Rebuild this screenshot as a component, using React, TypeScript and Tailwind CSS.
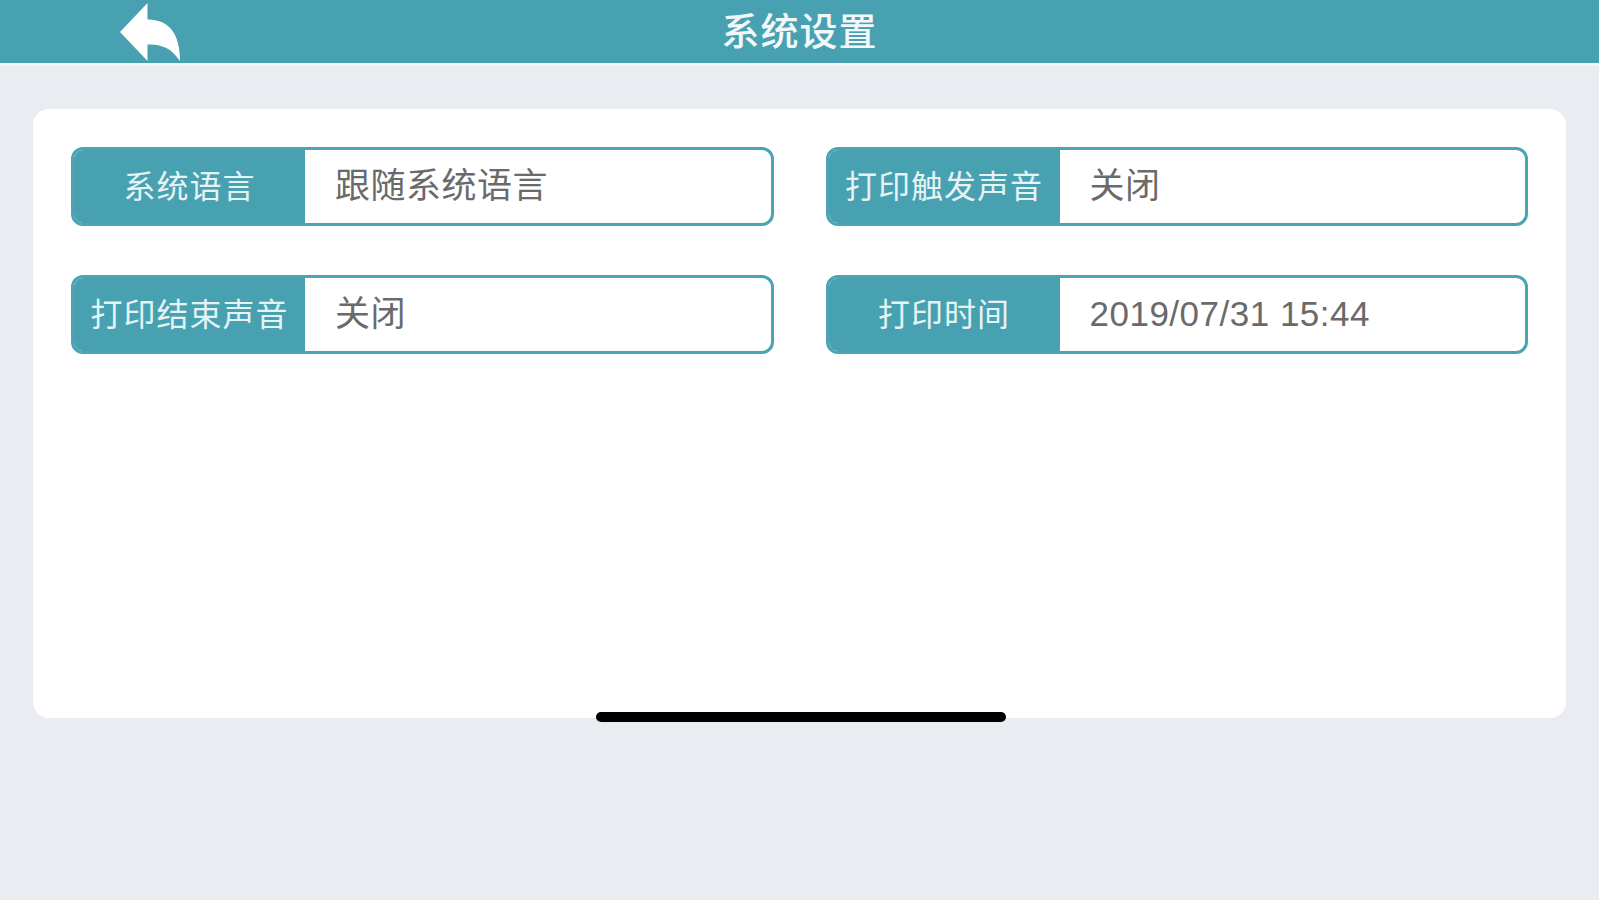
const rows = [
  { label: "系统语言", value: "跟随系统语言" },
  { label: "打印触发声音", value: "关闭" },
  { label: "打印结束声音", value: "关闭" },
  { label: "打印时间", value: "2019/07/31 15:44" },
];

const BackIcon = () => (
  <svg width="60" height="58" viewBox="64 88 384 336" preserveAspectRatio="none" fill="#ffffff">
    <path d="M240 424v-96c116.4 0 159.39 33.76 208 96 0-119.23-39.57-240-208-240V88L64 256z" />
  </svg>
);

const App = () => {
  return (
    <div
      className="relative w-[1599px] h-[900px] bg-[#e9edf1] overflow-hidden"
      style={{ fontFamily: '"Liberation Sans", "Noto Sans CJK SC", sans-serif' }}
    >
      <header className="relative h-[63px] bg-[#48a1b1] border-b-[3px] border-[#f3f5f7] box-content flex items-center justify-center">
        <button className="absolute left-[120px] top-[3px]">
          <BackIcon />
        </button>
        <h1 className="text-[38px] font-medium text-[#f2f8f9] leading-none tracking-[1px]">系统设置</h1>
      </header>

      <main className="px-[33px] pt-[43px]">
        <div className="h-[609px] bg-white rounded-[16px] px-[38px] pt-[38px]">
          <div className="grid grid-cols-2 gap-x-[52px] gap-y-[49px]">
            {rows.map((row, i) => (
              <div
                key={i}
                className="flex h-[79px] border-[3px] border-[#4ba3b3] rounded-[12px] overflow-hidden"
              >
                <div className="w-[231px] shrink-0 bg-[#48a1b1] flex items-center justify-center text-[32px] tracking-[1px] text-[#e6f3f5] whitespace-nowrap">
                  {row.label}
                </div>
                <div className="flex-1 flex items-center pl-[30px] text-[35px] tracking-[0.5px] text-[#6a6a6a] whitespace-nowrap">
                  {row.value}
                </div>
              </div>
            ))}
          </div>
        </div>
      </main>

      <div className="absolute left-[596px] top-[712px] w-[410px] h-[10px] rounded-full bg-black" />
    </div>
  );
};

export default App;
